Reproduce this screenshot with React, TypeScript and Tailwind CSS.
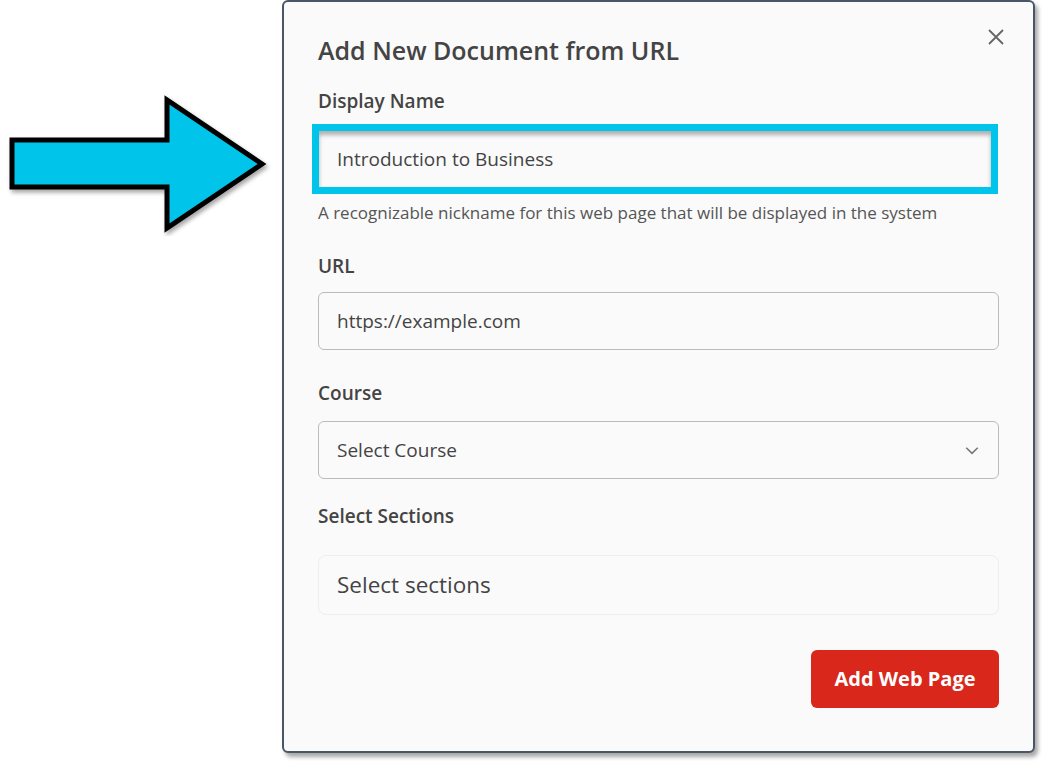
import React from "react";

export default function App() {
  return (
    <div className="w-[1045px] h-[771px] bg-white flex" style={{ fontFamily: '"Open Sans", sans-serif' }}>
      <div className="w-[282px] shrink-0 pt-[94px] pl-[6px]">
        <svg width="266" height="142" viewBox="0 0 266 142">
          <defs>
            <filter id="sh" x="-10%" y="-10%" width="130%" height="130%">
              <feDropShadow dx="2" dy="3" stdDeviation="2" floodColor="#000" floodOpacity="0.35" />
            </filter>
          </defs>
          <polygon
            points="6,46 161,46 161,6 256,70 161,134 161,93 6,93"
            fill="#00c4ea"
            stroke="#000"
            strokeWidth="5"
            strokeLinejoin="miter"
            filter="url(#sh)"
          />
        </svg>
      </div>
      <div className="w-[753px] h-[753px] shrink-0 bg-[#fafafa] border-2 border-[#4a5568] rounded-md shadow-[3px_4px_4px_rgba(0,0,0,0.35)] relative px-[34px] pt-[32px] text-[#444]">
        <button className="absolute right-[28px] top-[26px] text-[#666]">
          <svg width="18" height="18" viewBox="0 0 18 18"><path d="M2 2L16 16M16 2L2 16" stroke="#666" strokeWidth="1.8" /></svg>
        </button>
        <h2 className="text-[25px] font-semibold leading-[32px] text-[#444]">Add New Document from URL</h2>
        <div className="mt-[22px] text-[19px] font-semibold leading-[26px]">Display Name</div>
        <div className="mt-[10px] -ml-[6px] w-[686px] h-[70px] border-[7px] border-[#00c4ea] bg-[#fafafa] shadow-[inset_0_4px_4px_rgba(0,0,0,0.3)] flex items-center pl-[18px] text-[19px] text-[#444]">
          Introduction to Business
        </div>
        <div className="mt-[7px] text-[17px] text-[#555] leading-[24px]">A recognizable nickname for this web page that will be displayed in the system</div>
        <div className="mt-[28px] text-[19px] font-semibold leading-[26px]">URL</div>
        <div className="mt-[13px] h-[58px] border border-[#bbb] rounded-md flex items-center px-[18px] text-[19px] text-[#444]">https://example.com</div>
        <div className="mt-[30px] text-[19px] font-semibold leading-[26px]">Course</div>
        <div className="mt-[15px] h-[58px] border border-[#bbb] rounded-md flex items-center justify-between px-[18px] text-[19px] text-[#444]">
          <span>Select Course</span>
          <svg width="16" height="16" viewBox="0 0 14 14"><path d="M2 5l5 5 5-5" fill="none" stroke="#777" strokeWidth="1.4" /></svg>
        </div>
        <div className="mt-[24px] text-[19px] font-semibold leading-[26px]">Select Sections</div>
        <div className="mt-[26px] h-[60px] border border-[#eee] rounded-lg flex items-center px-[18px] text-[22.5px] text-[#444]">Select sections</div>
        <div className="flex justify-end mt-[35px]">
          <button className="w-[188px] h-[58px] bg-[#d9271c] rounded-md text-white text-[20px] font-bold">Add Web Page</button>
        </div>
      </div>
    </div>
  );
}
